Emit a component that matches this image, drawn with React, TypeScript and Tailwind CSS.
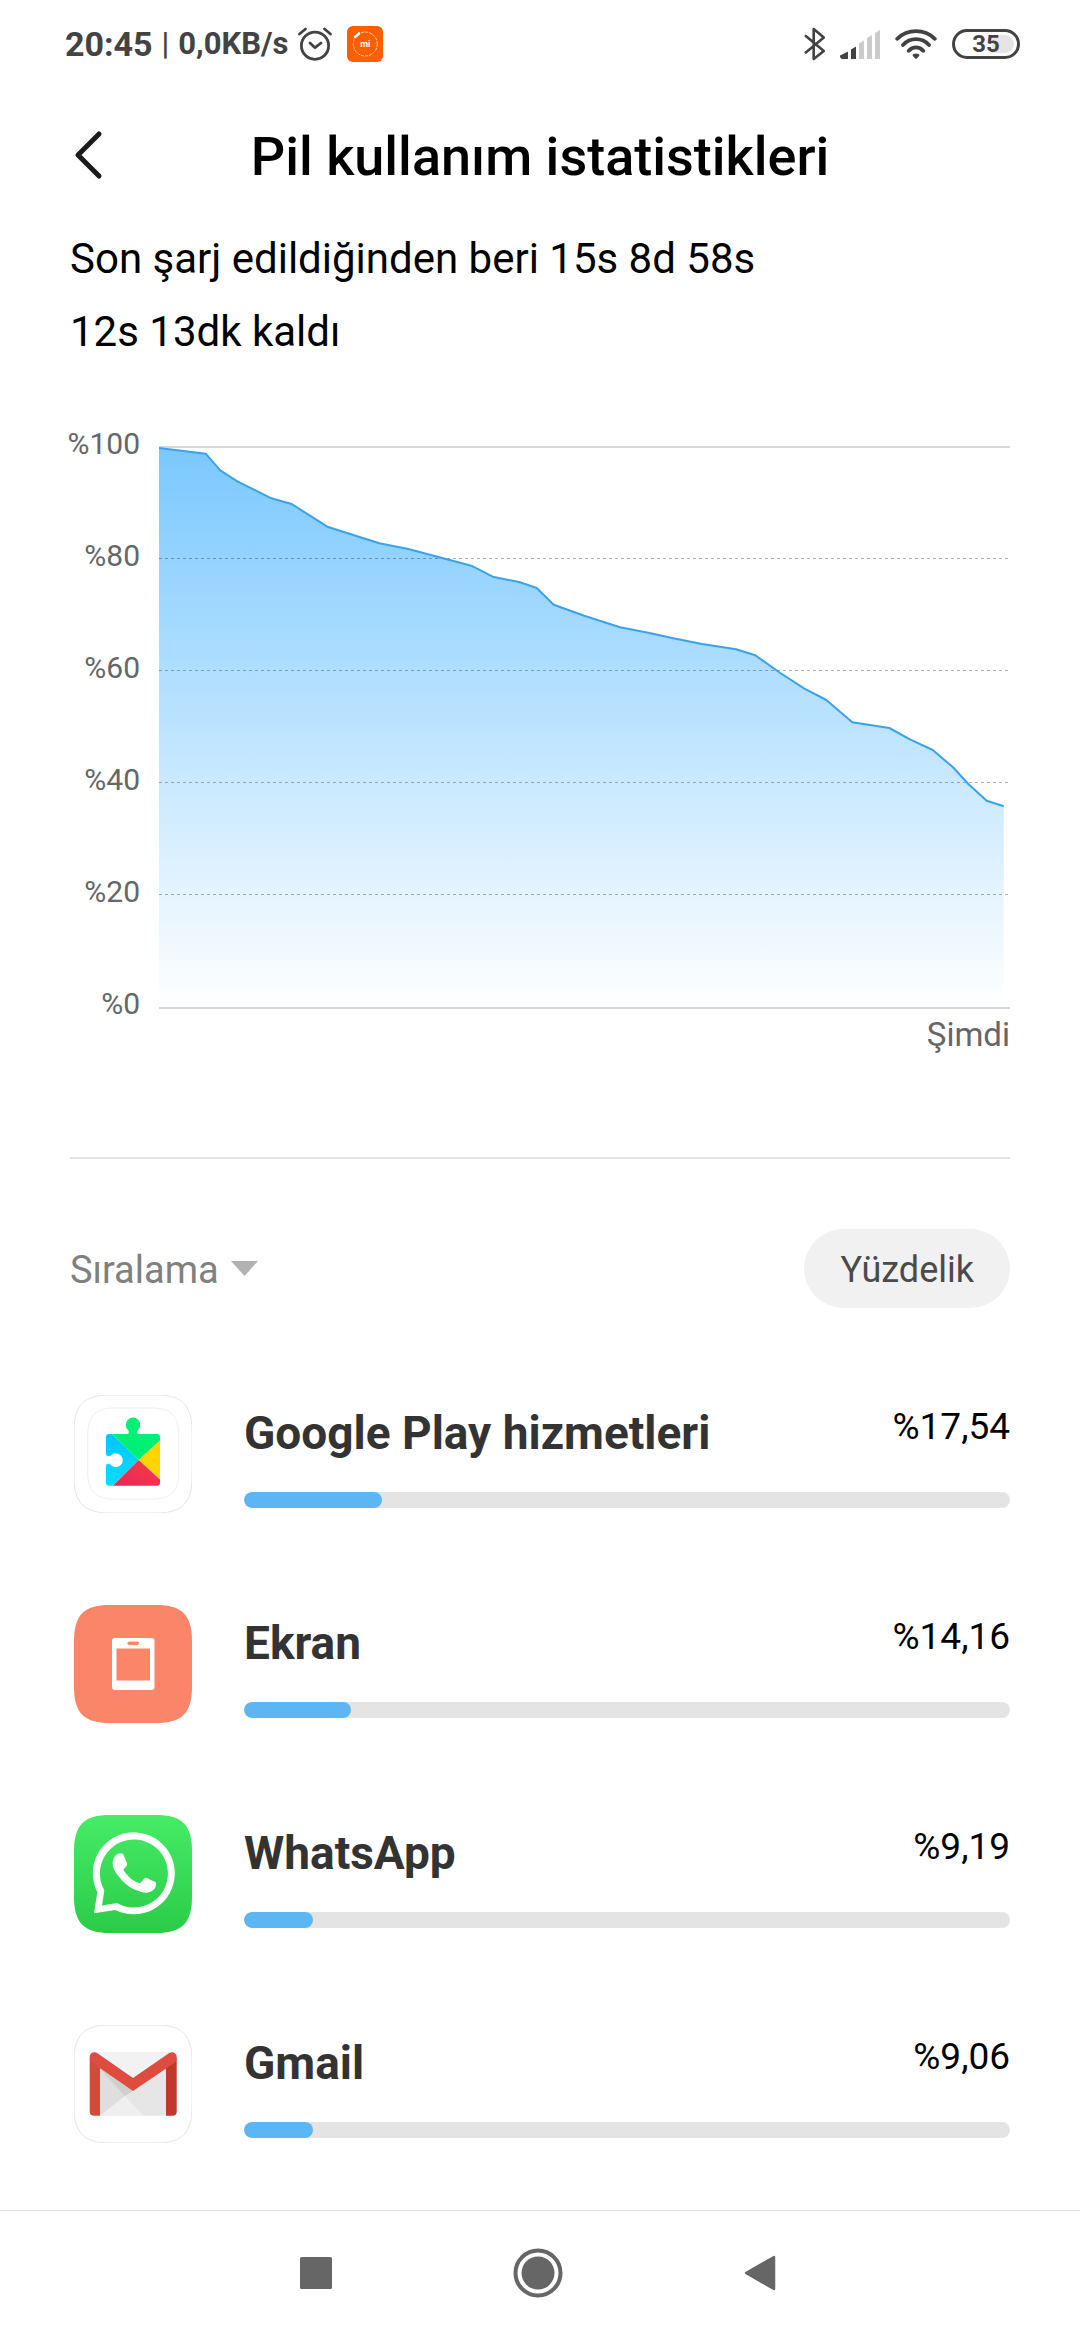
import type { ReactNode } from "react";

const SQUIRCLE = "M0 36C0 10 10 0 36 0H82C108 0 118 10 118 36V82C118 108 108 118 82 118H36C10 118 0 108 0 82Z";

const BATTERY_LINE =
  "0,2 46.7,7.7 61.3,24.3 78.3,35.3 112.3,52.3 132.7,58 168.3,80.7 220.3,97.3 249.3,103 312.3,119.7 333.7,130.7 361,136.3 377.7,142 394.7,158.7 426,170 461,181.3 489.3,186.7 514.3,192.3 543,198 577,203.3 596.3,209.3 621.3,227 645,242.3 667.3,254 693.3,276.3 730.3,282 751,293.3 773.7,304 794,321.3 809.3,338 827.7,354.7 844.7,360.3";

const LEVELS = ["%100", "%80", "%60", "%40", "%20", "%0"];

const PlayServicesIcon = () => (
  <svg viewBox="0 0 118 118" className="size-[118px]" aria-hidden="true">
    <defs>
      <clipPath id="puzzle">
        <path d="M35 39H53C55 39 55.500 36.500 54 35A7.200 7.200 0 1 1 64 35C62.500 36.500 63 39 65 39H83Q86 39 86 42V87.700Q86 90.700 83 90.700H35Q32 90.700 32 87.700V71Q32 69 34 69C36 69 36.500 69.500 38 71A6.900 6.900 0 1 0 38 59.500C36.500 61 36 61 34 61Q32 61 32 59V42Q32 39 35 39Z" />
      </clipPath>
      <linearGradient id="playBlue" x1="0" y1="0" x2="0" y2="1">
        <stop offset="0" stopColor="#00c3ff" />
        <stop offset="1" stopColor="#00e2ff" />
      </linearGradient>
      <linearGradient id="playRed" x1="1" y1="0" x2="0" y2="1">
        <stop offset="0" stopColor="#ff3a44" />
        <stop offset="1" stopColor="#e22859" />
      </linearGradient>
    </defs>
    <path d={SQUIRCLE} fill="#fff" stroke="#e6e6e6" />
    <path d={SQUIRCLE} fill="#fff" stroke="#e9e9e9" transform="translate(13.7 13) scale(.772)" />
    <g clipPath="url(#puzzle)">
      <path d="M30 31L64.700 65L30 99Z" fill="url(#playBlue)" />
      <path d="M30 31V20H90V41.700L64.700 65Z" fill="#00f076" />
      <path d="M88 43.700L64.700 65L88 86.300Z" fill="#ffd500" />
      <path d="M88 86.300L64.700 65L38 91.500H88Z" fill="url(#playRed)" />
    </g>
  </svg>
);

const ScreenIcon = () => (
  <svg viewBox="0 0 118 118" className="size-[118px]" aria-hidden="true">
    <path d={SQUIRCLE} fill="#fa8568" />
    <rect x="38" y="33" width="42.500" height="52" rx="3" fill="#fff" />
    <rect x="42.500" y="43.500" width="33.500" height="32" fill="#fa8568" />
    <rect x="53.500" y="36.500" width="11.500" height="3.500" rx="1.700" fill="#fa8568" />
  </svg>
);

const WhatsAppIcon = () => (
  <svg viewBox="0 0 118 118" className="size-[118px]" aria-hidden="true">
    <defs>
      <linearGradient id="waGreen" x1="0" y1="0" x2="0" y2="1">
        <stop offset="0" stopColor="#46ec65" />
        <stop offset="1" stopColor="#2bcb48" />
      </linearGradient>
    </defs>
    <path d={SQUIRCLE} fill="url(#waGreen)" />
    <path
      fill="#fff"
      fillRule="evenodd"
      d="M23.300 77L20 98.300L41.500 95A41 41 0 1 0 23.300 77ZM30.300 75.200L28 90.500L43 88A34 34 0 1 0 30.300 75.200Z"
    />
    <path
      fill="#fff"
      transform="translate(17 16) scale(3.6 3.5)"
      d="M17.472 14.382c-.297-.149-1.758-.867-2.03-.967-.273-.099-.471-.148-.67.15-.197.297-.767.966-.94 1.164-.173.199-.347.223-.644.075-.297-.15-1.255-.463-2.39-1.475-.883-.788-1.48-1.761-1.653-2.059-.173-.297-.018-.458.13-.606.134-.133.298-.347.446-.52.149-.174.198-.298.298-.497.099-.198.05-.371-.025-.52-.075-.149-.669-1.612-.916-2.207-.242-.579-.487-.5-.669-.51-.173-.008-.371-.01-.57-.01-.198 0-.52.074-.792.372-.272.297-1.04 1.016-1.04 2.479 0 1.462 1.065 2.875 1.213 3.074.149.198 2.096 3.2 5.077 4.487.709.306 1.262.489 1.694.625.712.227 1.36.195 1.871.118.571-.085 1.758-.719 2.006-1.413.248-.694.248-1.289.173-1.413-.074-.124-.272-.198-.57-.347"
    />
  </svg>
);

const GmailIcon = () => (
  <svg viewBox="0 0 118 118" className="size-[118px]" aria-hidden="true">
    <path d={SQUIRCLE} fill="#fff" stroke="#e6e6e6" />
    <path d="M22 27.300H96L92 90.700H26Z" fill="#e6e6e6" />
    <path d="M22.700 27.300H95.300L59 54Z" fill="#f2f2f2" />
    <path d="M26 44L51 71L26 90Z" fill="#dedede" />
    <path d="M26 44L59 66L51 71Z" fill="#cfcfcf" />
    <path d="M51 71L70 90.700H26Z" fill="#efefef" />
    <path d="M15.700 33H26V90.700H20Q15.700 90.700 15.700 86.500Z" fill="#d5493d" />
    <path d="M92 33H102.700V86.500Q102.700 90.700 98.500 90.700H92Z" fill="#c0392b" />
    <path
      d="M15.700 32C15.700 28 20 26 23 28L59 53L95.300 28C98.500 26 102.700 28 102.700 32Q102.700 36 99.500 38.500L59 66L19 38.500Q15.700 36 15.700 32Z"
      fill="#de4c40"
    />
  </svg>
);

type Usage = { name: string; value: string; fill: number; icon: ReactNode };

const APPS: Usage[] = [
  { name: "Google Play hizmetleri", value: "%17,54", fill: 18, icon: <PlayServicesIcon /> },
  { name: "Ekran", value: "%14,16", fill: 14, icon: <ScreenIcon /> },
  { name: "WhatsApp", value: "%9,19", fill: 9, icon: <WhatsAppIcon /> },
  { name: "Gmail", value: "%9,06", fill: 9, icon: <GmailIcon /> },
];

const StatusBar = () => (
  <div className="flex h-[88px] items-center justify-between pl-[65px] pr-[60px] font-bold text-[#434343]">
    <div className="flex items-center">
      <span className="text-[34px]">20:45</span>
      <span className="mx-[9px] text-[31px] font-medium">|</span>
      <span className="text-[31px]">0,0KB/s</span>
      <svg viewBox="0 0 36 36" className="ml-[9px] size-9" fill="none" stroke="#434343" strokeWidth="2.8" strokeLinecap="round" strokeLinejoin="round" aria-hidden="true">
        <circle cx="18" cy="19.700" r="13.600" />
        <path d="M2.500 8L8.500 3M27.500 3L33.500 8M13 17L18 21.700L24 17" />
      </svg>
      <svg viewBox="0 0 36 36" className="ml-[14px] size-9" aria-hidden="true">
        <rect width="36" height="36" rx="6" fill="#ff5f00" />
        <circle cx="18.300" cy="18" r="12" fill="none" stroke="#fff" strokeOpacity=".75" strokeDasharray="3 1" />
        <path d="M6 13L13 6" stroke="#ff5f00" strokeWidth="7" />
        <path d="M8 11L12 7.500" stroke="#fff" strokeWidth="2.600" strokeLinecap="round" />
        <text x="18.300" y="21" fontSize="9" fontWeight="700" textAnchor="middle" fill="#fff">mi</text>
      </svg>
    </div>
    <div className="flex items-center gap-[15px]">
      <svg viewBox="2 0 21 36" className="h-9 w-[21px]" fill="none" stroke="#434343" strokeWidth="2.600" strokeLinecap="round" strokeLinejoin="round" aria-hidden="true">
        <path d="M3.800 10L21.800 25L11.700 33V3L21.800 11.500L3.800 26.500" />
      </svg>
      <svg viewBox="0 0 40 29" className="h-[29px] w-10" aria-hidden="true">
        <path d="M0 27V25.500L8 21.500V29H1.500ZM11 19.500L16 16.500V29H11Z" fill="#434343" />
        <path d="M19 13.500L24 10.500V29H19ZM27 8L32 5V29H27ZM35 3L40 0V29H35Z" fill="#cbcbcb" />
      </svg>
      <svg viewBox="0 0 42 30" className="h-[30px] w-[42px]" fill="none" stroke="#434343" strokeWidth="3.800" strokeLinecap="round" aria-hidden="true">
        <path d="M2.200 9.800A27 27 0 0 1 39.800 9.800M8 16A17.500 17.500 0 0 1 34 16M13.800 21.700A9.500 9.500 0 0 1 28.200 21.700" />
        <path d="M21 24.500C23 24.500 24.800 25.500 24.300 26.800L21.800 29.500Q21 30.300 20.200 29.500L17.700 26.800C17.200 25.500 19 24.500 21 24.500Z" fill="#434343" stroke="none" />
      </svg>
      <div className="flex h-[30px] w-[68px] items-center justify-center rounded-full border-[3px] border-[#434343] bg-[linear-gradient(90deg,#ffffff_60%,#e5e5e5_60%)] bg-clip-content p-[3px] text-2xl leading-none">
        35
      </div>
    </div>
  </div>
);

const BatteryChart = () => (
  <div className="mt-5 flex">
    <div className="flex w-[70px] shrink-0 flex-col text-right text-[30px] leading-[112px] text-[#666]">
      {LEVELS.map((level) => (
        <span key={level} className="flex justify-end">{level}</span>
      ))}
    </div>
    <div className="ml-[19px] flex-1 pt-[58px]">
      <svg viewBox="0 0 851 563" preserveAspectRatio="none" className="block h-[563px] w-full" role="img" aria-label="Pil seviyesi">
        <defs>
          <linearGradient id="level" x1="0" y1="0" x2="0" y2="1">
            <stop offset="0" stopColor="#7ac8ff" />
            <stop offset="1" stopColor="#ffffff" />
          </linearGradient>
        </defs>
        <path d="M0 1H851M0 562H851" stroke="#d8d8d8" strokeWidth="2" />
        <polygon points={`${BATTERY_LINE} 844.7,561 0,561`} fill="url(#level)" />
        <path
          d="M0 112.500H851M0 224.500H851M0 336.500H851M0 448.500H851"
          stroke="#000"
          strokeOpacity=".3"
          strokeDasharray="3 3"
        />
        <polyline points={BATTERY_LINE} fill="none" stroke="#3ba2ea" strokeWidth="2" strokeLinejoin="round" />
      </svg>
      <p className="text-right text-[33px] leading-[51px] text-[#666]">Şimdi</p>
    </div>
  </div>
);

const AppRow = ({ name, value, fill, icon }: Usage) => (
  <li className="flex h-[210px] items-start pt-[46px]">
    <div className="ml-1 shrink-0">{icon}</div>
    <div className="ml-[52px] mt-2 flex-1">
      <div className="flex items-start justify-between">
        <h2 className="text-[46px] font-bold leading-[60px] text-[#333]">{name}</h2>
        <span className="text-[37px] leading-[48px]">{value}</span>
      </div>
      <div
        role="progressbar"
        aria-label={name}
        aria-valuenow={fill}
        className="mt-[29px] h-4 overflow-hidden rounded-full bg-[#e4e4e4]"
      >
        <div className="h-full rounded-full bg-[#5cb6f4]" style={{ width: `${fill}%` }} />
      </div>
    </div>
  </li>
);

const NavBar = () => (
  <nav className="mt-auto flex h-[130px] items-center border-t border-[#e2e2e2] px-[204px] pb-1.5">
    <button aria-label="Son uygulamalar" className="flex flex-1 justify-start pl-24">
      <svg viewBox="0 0 32 32" className="size-8" aria-hidden="true">
        <rect width="32" height="32" rx="1.500" fill="#666" />
      </svg>
    </button>
    <button aria-label="Ana ekran">
      <svg viewBox="0 0 50 50" className="size-[50px]" aria-hidden="true">
        <circle cx="25" cy="25" r="22.500" fill="none" stroke="#666" strokeWidth="4" />
        <circle cx="25" cy="25" r="16.500" fill="#666" />
      </svg>
    </button>
    <button aria-label="Geri" className="flex flex-1 justify-end pr-[100px]">
      <svg viewBox="0 0 32 36" className="h-9 w-8" aria-hidden="true">
        <path d="M2 18L30 2V34Z" fill="#666" stroke="#666" strokeWidth="2.500" strokeLinejoin="round" />
      </svg>
    </button>
  </nav>
);

const App = () => {
  return (
    <div className="flex min-h-screen flex-col bg-white font-['Roboto',sans-serif] text-black">
      <StatusBar />
      <header className="mt-1 grid h-[130px] grid-cols-[1fr_auto_1fr] items-center px-[70px]">
        <button aria-label="Geri" className="justify-self-start pb-1">
          <svg viewBox="0 0 36 52" className="h-[52px] w-9" fill="none" stroke="#1a1a1a" strokeWidth="5" strokeLinecap="round" strokeLinejoin="round" aria-hidden="true">
            <path d="M29 5L8 26L29 47" />
          </svg>
        </button>
        <h1 className="text-[54px] font-medium leading-[72px]">Pil kullanım istatistikleri</h1>
      </header>
      <main className="px-[70px]">
        <div className="text-[42px] leading-[73px]">
          <p>Son şarj edildiğinden beri 15s 8d 58s</p>
          <p>12s 13dk kaldı</p>
        </div>
        <BatteryChart />
        <hr className="mt-[97px] border-t-2 border-[#e4e4e4]" />
        <div className="mt-[70px] flex items-center justify-between">
          <label className="flex items-center gap-3 text-[#808080]">
            <select aria-label="Sıralama" className="appearance-none bg-transparent pt-[3px] text-[38px] leading-[48px]">
              <option>Sıralama</option>
            </select>
            <svg viewBox="0 0 27 15" className="h-[15px] w-[27px]" aria-hidden="true">
              <path d="M0 0H27L13.500 15Z" fill="#b2b2b2" />
            </svg>
          </label>
          <button className="h-[79px] rounded-full bg-[#f1f1f1] px-9 pt-[3px] text-[36px] text-[#4a4a4a]">Yüzdelik</button>
        </div>
        <ul className="mt-[41px]">
          {APPS.map((app) => (
            <AppRow key={app.name} {...app} />
          ))}
        </ul>
      </main>
      <NavBar />
    </div>
  );
};

export default App;
